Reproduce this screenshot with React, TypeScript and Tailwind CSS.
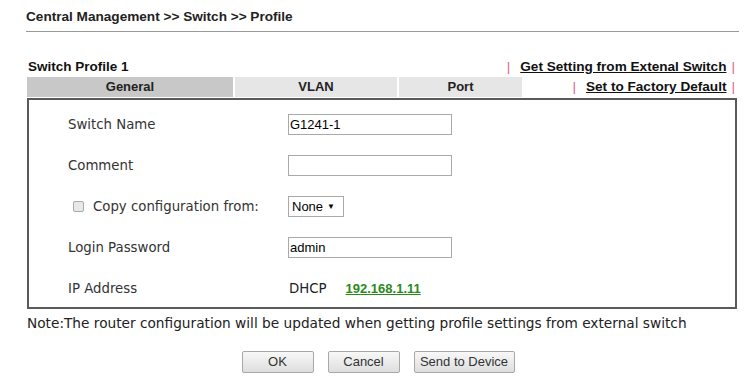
import React from "react";

const arial = { fontFamily: '"Liberation Sans", Arial, sans-serif' };
const tahoma = { fontFamily: '"DejaVu Sans", Tahoma, sans-serif' };

function Row({ label, children, check }: { label: string; children: React.ReactNode; check?: boolean }) {
  return (
    <div className="flex items-center h-[41px]">
      <div className="w-[259px] pl-[39px] flex items-center text-[13.3px] text-[#333]" style={tahoma}>
        {check && (
          <span className="inline-block w-[11px] h-[11px] border border-[#aaa] bg-[#e8e8e8] rounded-[2px] ml-[5px] mr-[9px]" />
        )}
        {label}
      </div>
      <div className="flex items-center">{children}</div>
    </div>
  );
}

function Input({ value }: { value?: string }) {
  return (
    <div className="w-[164px] h-[21px] border border-[#a9a9a9] bg-white flex items-center px-[1px] text-[13px] text-black" style={arial}>
      {value}
    </div>
  );
}

function Btn({ w, children }: { w: string; children: React.ReactNode }) {
  return (
    <div className={`${w} h-[22px] flex items-center justify-center border border-[#a8a8a8] rounded-[2px] bg-gradient-to-b from-[#f8f8f8] to-[#dedede] text-[13px] text-[#333]`} style={arial}>
      {children}
    </div>
  );
}

function Bar({ left }: { left?: boolean }) {
  return <span className={`text-[#e0608a] font-normal ${left ? "mr-[10px]" : "ml-[5px]"}`}>|</span>;
}

export default function App() {
  return (
    <div className="w-[756px] h-[385px] bg-white relative overflow-hidden" style={arial}>
      <div className="pl-[26px] pr-[17px] pt-[9px]">
        <div className="text-[13.6px] font-bold text-[#222] pb-[6px] border-b border-[#999] leading-[16px] whitespace-nowrap">
          Central Management &gt;&gt; Switch &gt;&gt; Profile
        </div>
      </div>
      <div className="pl-[27px] pr-[19px] mt-[25px]">
        <div className="flex items-center justify-between h-[20px] whitespace-nowrap">
          <div className="text-[13.5px] font-bold text-[#111] pl-[1px]">Switch Profile 1</div>
          <div className="flex items-center text-[13.6px] font-bold text-[#111] pr-[2px]">
            <Bar left />
            <span className="underline">Get Setting from Extenal Switch</span>
            <Bar />
          </div>
        </div>
        <div className="flex items-center justify-between h-[20px] whitespace-nowrap">
          <div className="flex h-[20px] text-[13px] font-bold text-[#222]">
            <div className="w-[206px] bg-[#c8c8c8] flex items-center justify-center">General</div>
            <div className="w-[162px] ml-[2px] bg-[#e6e6e6] flex items-center justify-center">VLAN</div>
            <div className="w-[123px] ml-[2px] bg-[#e6e6e6] flex items-center justify-center">Port</div>
          </div>
          <div className="flex items-center text-[13.6px] font-bold text-[#111] pr-[2px]">
            <Bar left />
            <span className="underline">Set to Factory Default</span>
            <Bar />
          </div>
        </div>
        <div className="mt-[1px] border-2 border-[#5a5a5a] h-[211px] pt-[4px]">
          <Row label="Switch Name"><Input value="G1241-1" /></Row>
          <Row label="Comment"><Input /></Row>
          <Row label="Copy configuration from:" check>
            <div className="h-[21px] w-[56px] border border-[#a9a9a9] flex items-center pl-[3px] text-[13px] text-black" style={arial}>
              None <span className="text-[8px] ml-[4px]">▼</span>
            </div>
          </Row>
          <Row label="Login Password"><Input value="admin" /></Row>
          <Row label="IP Address">
            <span className="text-[13.3px] text-[#222] ml-[1px]" style={tahoma}>DHCP</span>
            <span className="ml-[19px] text-[13px] font-bold text-[#2a8a1a] underline">192.168.1.11</span>
          </Row>
        </div>
        <div className="text-[13.7px] text-[#222] mt-[6px] leading-[16px] whitespace-nowrap" style={tahoma}>
          Note:The router configuration will be updated when getting profile settings from external switch
        </div>
        <div className="flex justify-center gap-[14px] mt-[20px] pr-[8px]">
          <Btn w="w-[72px]">OK</Btn>
          <Btn w="w-[72px]">Cancel</Btn>
          <Btn w="w-[101px]">Send to Device</Btn>
        </div>
      </div>
    </div>
  );
}
